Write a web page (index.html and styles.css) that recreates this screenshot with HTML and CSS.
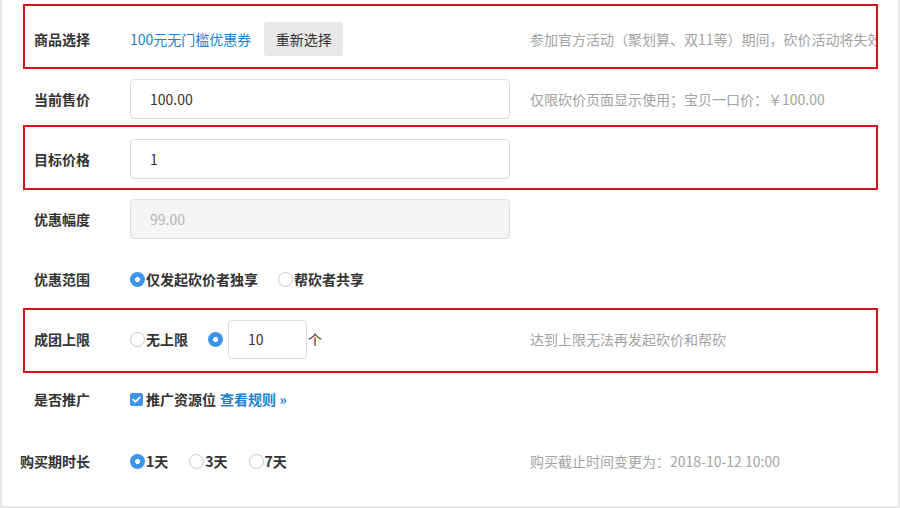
FILE: index.html
```html
<!DOCTYPE html>
<html lang="zh-CN">
<head>
    <meta charset="UTF-8">
    <title>砍价活动设置</title>
    <link rel="stylesheet" href="styles.css">
</head>
<body>
    <div class="panel">
        <div class="row marked mark-top">
            <div class="label">商品选择</div>
            <div class="field">
                <a href="#" class="goods-link">100元无门槛优惠券</a>
                <button class="btn">重新选择</button>
            </div>
            <div class="hint">参加官方活动（聚划算、双11等）期间，砍价活动将失效</div>
        </div>
        <div class="row">
            <div class="label">当前售价</div>
            <div class="field"><input class="input" type="text" value="100.00"></div>
            <div class="hint">仅限砍价页面显示使用；宝贝一口价：￥100.00</div>
        </div>
        <div class="row marked mark-mid">
            <div class="label">目标价格</div>
            <div class="field"><input class="input" type="text" value="1"></div>
            <div class="hint"></div>
        </div>
        <div class="row">
            <div class="label">优惠幅度</div>
            <div class="field"><input class="input" type="text" value="99.00" disabled></div>
            <div class="hint"></div>
        </div>
        <div class="row">
            <div class="label">优惠范围</div>
            <div class="field">
                <label class="option"><span class="radio checked"></span>仅发起砍价者独享</label>
                <label class="option"><span class="radio"></span>帮砍者共享</label>
            </div>
            <div class="hint"></div>
        </div>
        <div class="row marked mark-low">
            <div class="label">成团上限</div>
            <div class="field">
                <label class="option"><span class="radio"></span>无上限</label>
                <label class="option tight"><span class="radio checked"></span></label>
                <input class="input small" type="text" value="10">
                <span class="unit">个</span>
            </div>
            <div class="hint">达到上限无法再发起砍价和帮砍</div>
        </div>
        <div class="row">
            <div class="label">是否推广</div>
            <div class="field">
                <label class="option">
                    <svg class="checkbox" width="13" height="13" viewBox="0 0 13 13">
                        <rect width="13" height="13" rx="2.5" fill="#3d95eb"/>
                        <path d="M3.2 6.6 L5.5 8.9 L9.9 4.3" fill="none" stroke="#fff" stroke-width="1.6" stroke-linecap="round" stroke-linejoin="round"/>
                    </svg>推广资源位</label>
                <a href="#" class="rule-link">查看规则 »</a>
            </div>
            <div class="hint"></div>
        </div>
        <div class="row last">
            <div class="label">购买期时长</div>
            <div class="field">
                <label class="option wide"><span class="radio checked"></span>1天</label>
                <label class="option wide"><span class="radio"></span>3天</label>
                <label class="option wide"><span class="radio"></span>7天</label>
            </div>
            <div class="hint">购买截止时间变更为：2018-10-12 10:00</div>
        </div>
    </div>
</body>
</html>
```

FILE: styles.css
```css
body {
    margin: 0;
    background-color: #fff;
    font-family: "Noto Sans CJK SC", "Noto Sans", sans-serif;
    font-size: 14px;
    color: #333;
}
.panel {
    box-sizing: border-box;
    width: 900px;
    height: 508px;
    padding-top: 9px;
    border: 2px solid #e6e6e6;
    border-top: none;
}
.row {
    position: relative;
    display: flex;
    align-items: center;
    height: 60px;
}
.row.last {
    margin-top: 2px;
}
/* red annotation frames */
.row.marked::after {
    content: "";
    position: absolute;
    left: 21px;
    width: 851px;
    border: 2px solid #d6101a;
    pointer-events: none;
}
.mark-top::after {
    top: -5px;
    bottom: 0;
}
.mark-mid::after {
    top: -4px;
    bottom: -1px;
}
.mark-low::after {
    top: -1px;
    bottom: -4px;
}
.label {
    width: 88px;
    margin-right: 40px;
    text-align: right;
    font-weight: bold;
    color: #333;
}
.field {
    width: 400px;
    display: flex;
    align-items: center;
}
.hint {
    width: 347px;
    overflow: hidden;
    white-space: nowrap;
    color: #a3a3a3;
}
.goods-link {
    color: #1b82d1;
    text-decoration: none;
}
.btn {
    margin-left: 13px;
    width: 79px;
    height: 34px;
    border: none;
    border-radius: 3px;
    background-color: #e8e8e8;
    font-family: inherit;
    font-size: 14px;
    color: #333;
}
.input {
    box-sizing: border-box;
    width: 380px;
    height: 40px;
    padding: 0 19px;
    border: 1px solid #dcdcdc;
    border-radius: 4px;
    font-family: inherit;
    font-size: 14px;
    color: #333;
    background-color: #fff;
}
.input:disabled {
    background-color: #f5f5f5;
    color: #b5b5b5;
}
.input.small {
    width: 79px;
    height: 39px;
}
.unit {
    margin-left: 1px;
}
.option {
    display: flex;
    align-items: center;
    margin-right: 20px;
    font-weight: bold;
    color: #333;
}
.option.tight {
    margin-right: 4px;
}
.option.wide {
    margin-right: 21px;
}
.radio {
    flex: none;
    box-sizing: border-box;
    width: 15px;
    height: 15px;
    margin-right: 1px;
    border: 1px solid #c8c8c8;
    border-radius: 50%;
    background-color: #fff;
}
.radio.checked {
    border: none;
    background: radial-gradient(circle closest-side, #fff 0 2.2px, #3d95eb 2.8px);
}
.checkbox {
    flex: none;
    margin-right: 3px;
}
.rule-link {
    margin-left: -16px;
    color: #1b82d1;
    font-weight: bold;
    text-decoration: none;
}
```
